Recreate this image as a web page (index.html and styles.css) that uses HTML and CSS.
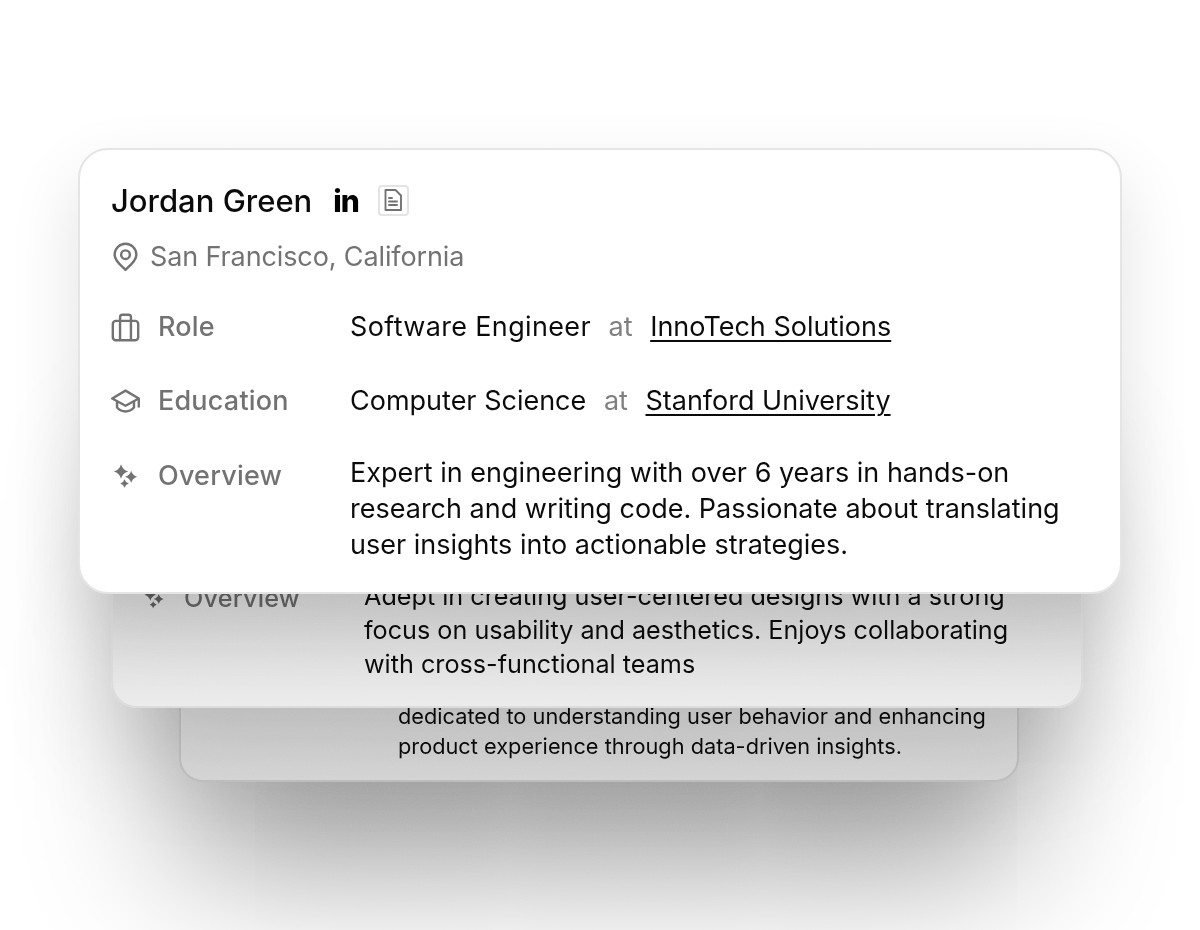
FILE: index.html
```html
<!DOCTYPE html>
<html lang="en">
<head>
    <meta charset="UTF-8">
    <meta name="viewport" content="width=device-width, initial-scale=1.0">
    <title>Profile cards</title>
    <link rel="stylesheet" href="styles.css">
</head>
<body>

<div class="stack">
    <!-- back card -->
    <div class="card card-back">
        <div class="row">
            <div class="row-value">dedicated to understanding user behavior and enhancing<br>product experience through data-driven insights.</div>
        </div>
    </div>

    <!-- middle card -->
    <div class="card card-middle">
        <div class="row">
            <div class="row-label">
                <svg class="icon" viewBox="0 0 24 24"><path d="M8.3 2.7Q9.6 7.4 14.3 8.7 9.6 10 8.3 14.7 7 10 2.3 8.7 7 7.4 8.3 2.7Z"/><path d="M16.7 8Q17.8 11.9 21.7 13 17.8 14.1 16.7 18 15.6 14.1 11.7 13 15.6 11.9 16.7 8Z"/><path d="M11.2 15.2Q12 17.9 14.7 18.7 12 19.5 11.2 22.2 10.4 19.5 7.7 18.7 10.4 17.9 11.2 15.2Z"/></svg>
                <span>Overview</span>
            </div>
            <div class="row-value">Adept in creating user-centered designs with a strong<br>focus on usability and aesthetics. Enjoys collaborating<br>with cross-functional teams</div>
        </div>
    </div>

    <!-- front card -->
    <div class="card card-front">
        <div class="name-line">
            <h1 class="name">Jordan Green</h1>
            <span class="linkedin">in</span>
            <span class="doc-button">
                <svg viewBox="0 0 24 24" fill="none" stroke="#6b6b6b" stroke-width="1.9" stroke-linejoin="round" stroke-linecap="round"><path d="M4.5 2h10l5.5 5.500V22H4.500z"/><path d="M8 10h3M8 13.500h8M8 17h8"/></svg>
            </span>
        </div>
        <div class="location">
            <svg class="pin" viewBox="0 0 24 24" fill="none" stroke="#6b6b6b" stroke-width="2"><path d="M12 23c-4-4-9-7.500-9-12.500a9 9 0 0 1 18 0c0 5-5 8.500-9 12.500z" stroke-linejoin="round"/><circle cx="12" cy="10.500" r="3.600"/></svg>
            <span>San Francisco, California</span>
        </div>

        <div class="row">
            <div class="row-label">
                <svg class="icon icon-line" viewBox="0 0 24 24"><rect x="1.500" y="6.500" width="21" height="16" rx="2.500"/><path d="M7.500 22.500V3.500a2 2 0 0 1 2-2h5a2 2 0 0 1 2 2v19"/></svg>
                <span>Role</span>
            </div>
            <div class="row-value"><span class="job-title">Software Engineer</span> <span class="at">at</span> <a class="link">InnoTech Solutions</a></div>
        </div>
        <div class="row row-tight">
            <div class="row-label">
                <svg class="icon icon-line" viewBox="0 0 24 24"><path d="M12 3L1 9.500 12 15.500 23 9.500z" stroke-linejoin="round"/><path d="M5 12v5c2 2.200 4.500 3.300 7 3.300s5-1.100 7-3.300v-5"/><path d="M23 9.500V17"/></svg>
                <span>Education</span>
            </div>
            <div class="row-value">Computer Science <span class="at">at</span> <a class="link">Stanford University</a></div>
        </div>
        <div class="row row-long">
            <div class="row-label">
                <svg class="icon" viewBox="0 0 24 24"><path d="M8.3 2.7Q9.6 7.4 14.3 8.7 9.6 10 8.3 14.7 7 10 2.3 8.7 7 7.4 8.3 2.7Z"/><path d="M16.7 8Q17.8 11.9 21.7 13 17.8 14.1 16.7 18 15.6 14.1 11.7 13 15.6 11.9 16.7 8Z"/><path d="M11.2 15.2Q12 17.9 14.7 18.7 12 19.5 11.2 22.2 10.4 19.5 7.7 18.7 10.4 17.9 11.2 15.2Z"/></svg>
                <span>Overview</span>
            </div>
            <div class="row-value">Expert in engineering with over 6 years in hands-on<br>research and writing code. Passionate about translating<br>user insights into actionable strategies.</div>
        </div>
    </div>

    <!-- grain over the shadows -->
    <svg class="grain" width="1200" height="930">
        <filter id="noise">
            <feTurbulence type="fractalNoise" baseFrequency="0.8" numOctaves="2"/>
            <feColorMatrix values="0.33 0.33 0.33 0 0 0.33 0.33 0.33 0 0 0.33 0.33 0.33 0 0 0 0 0 0 1"/>
        </filter>
        <rect width="1200" height="930" filter="url(#noise)"/>
    </svg>
</div>

</body>
</html>
```

FILE: styles.css
```css
body {
    margin: 0;
    background: #fff;
    font-family: "Inter", "Liberation Sans", sans-serif;
    color: #0a0a0a;
    overflow: hidden;
}

.stack {
    position: relative;
    height: 930px;
    overflow: hidden;
}

.grain {
    position: absolute;
    left: 0;
    top: 0;
    opacity: 0.14;
    mix-blend-mode: overlay;
    pointer-events: none;
}

/* cards sit on top of each other */
.card {
    position: absolute;
    box-sizing: border-box;
    overflow: hidden;
    border-style: solid;
    border-color: #e3e3e3;
}

.card-front {
    left: 78px;
    top: 148px;
    width: 1044px;
    height: 446px;
    padding: 31px 31px;
    background: #fff;
    border-width: 2px;
    border-radius: 30px;
    box-shadow: 0 30px 70px rgba(0, 0, 0, 0.12);
}

.card-middle {
    left: 111px;
    top: 400px;
    width: 972px;
    height: 308px;
    padding: 177px 0 0 29px;
    background: linear-gradient(180deg, #cecece 0%, #cecece 58%, #ebebeb 100%);
    border-width: 2px;
    border-color: #dadada;
    border-radius: 26px;
    box-shadow: 0 30px 110px rgba(0, 0, 0, 0.22);
}

.card-back {
    left: 179px;
    top: 500px;
    width: 840px;
    height: 282px;
    padding: 199px 0 0 217px;
    background: #dcdcdc;
    border-width: 2px;
    border-color: #c2c2c2;
    border-radius: 24px;
    box-shadow: 0 80px 150px rgba(0, 0, 0, 0.42);
}

.name-line {
    display: flex;
    align-items: center;
    height: 38px;
}

.name {
    margin: 0;
    font-size: 31px;
    font-weight: 500;
}

.linkedin {
    margin: 2px 0 0 21px;
    font-size: 30px;
    font-weight: 800;
    color: #000;
    letter-spacing: -1px;
}

.doc-button {
    display: flex;
    align-items: center;
    justify-content: center;
    width: 27px;
    height: 27px;
    margin-left: 19px;
    border: 2px solid #e2e2e2;
    border-radius: 4px;
}

.doc-button svg {
    width: 24px;
    height: 24px;
}

.location {
    display: flex;
    align-items: center;
    gap: 10px;
    margin: 21px 0 36px;
    color: #6b6b6b;
    font-size: 27px;
    letter-spacing: -0.12px;
}

.pin {
    width: 29px;
    height: 29px;
}

.row {
    display: flex;
    margin-bottom: 38px;
    font-size: 27px;
    line-height: 36px;
}

.row-tight {
    margin-bottom: 36px;
}

.row-label {
    display: flex;
    align-items: center;
    gap: 18px;
    width: 239px;
    height: 36px;
    flex-shrink: 0;
    color: #6b6b6b;
    font-weight: 500;
    letter-spacing: 0.2px;
}

.row-long .row-label {
    height: 41px;
}

.row-value {
    white-space: nowrap;
}

.job-title {
    letter-spacing: 0.35px;
}

.at {
    margin: 0 10px;
    color: #777;
}

.link {
    text-decoration: underline;
    text-underline-offset: 4px;
    text-decoration-thickness: 2px;
}

.icon {
    width: 29px;
    height: 29px;
    flex-shrink: 0;
    fill: #6b6b6b;
}

.icon-line {
    fill: none;
    stroke: #6b6b6b;
    stroke-width: 2;
}

.card-middle .row {
    font-size: 25.2px;
    line-height: 34px;
}

.card-middle .row-label {
    width: 222px;
    height: 38px;
    color: #5c5c5c;
}

.card-middle .icon {
    width: 24px;
    height: 24px;
    fill: #555;
}

.card-back .row {
    font-size: 21.75px;
    line-height: 30px;
}
```
